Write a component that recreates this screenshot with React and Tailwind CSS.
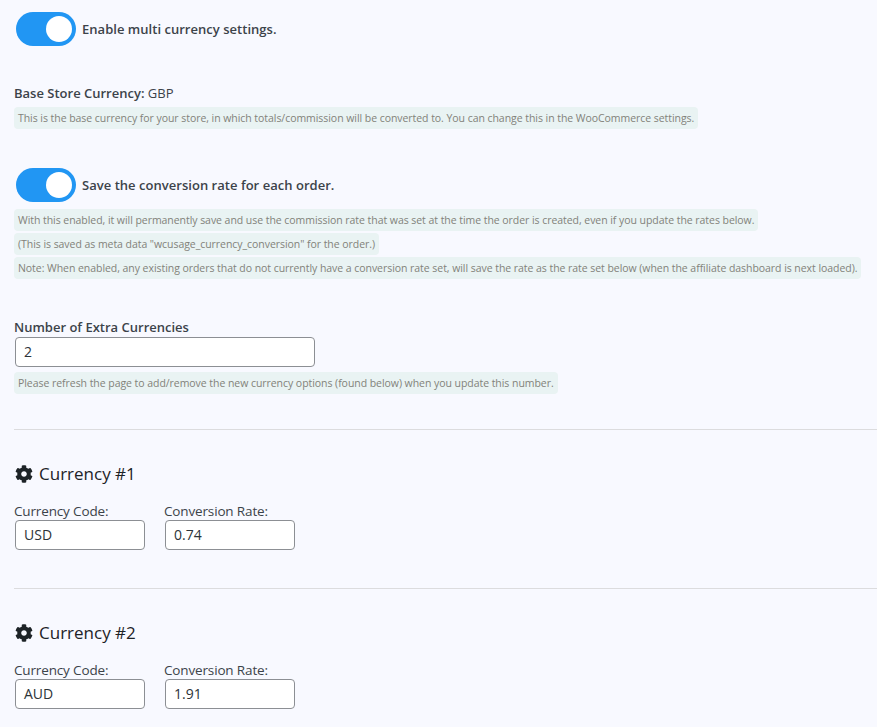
import { FaCog } from 'react-icons/fa';

const Toggle = () => (
  <span className="relative inline-block w-[60px] h-[34px] rounded-full bg-[#2196f3] shrink-0">
    <span className="absolute left-[30px] top-[4px] w-[26px] h-[26px] rounded-full bg-white"></span>
  </span>
);

const Note = ({ children }) => (
  <div className="flex">
    <span className="h-[22px] px-[4px] rounded-[4px] bg-[#e9f3f3] text-[#82827a] text-[10.5px] leading-[22px] whitespace-nowrap tracking-[-0.05px]">
      {children}
    </span>
  </div>
);

const Field = ({ label, value }) => (
  <div className="w-[150px]">
    <div className="text-[13.5px] leading-[18px] text-[#3c434a] tracking-[-0.15px]">{label}</div>
    <div className="ml-[1px] w-[130px] h-[30px] px-[8px] rounded-[4px] border border-[#8c8f94] bg-white text-[14px] leading-[28px] text-[#2c3338]">
      {value}
    </div>
  </div>
);

const Currency = ({ n, code, rate }) => (
  <section>
    <div className="h-[1px] bg-[#dcdcde]"></div>
    <h3 className="mt-[31px] flex items-center gap-[6px] h-[26px] text-[17px] font-medium text-[#1d2327]">
      <FaCog className="w-[18px] h-[18px] ml-[1px]" />
      <span>Currency #{n}</span>
    </h3>
    <div className="mt-[15px] flex">
      <Field label="Currency Code:" value={code} />
      <Field label="Conversion Rate:" value={rate} />
    </div>
  </section>
);

export default function App() {
  return (
    <div className="h-[727px] overflow-hidden bg-[#f8f9ff] pl-[14px] font-['Open_Sans','Noto_Sans',sans-serif] text-[#3c434a]">
      <div className="pt-[12px] pl-[2px] flex items-center gap-[6px]">
        <Toggle />
        <span className="pt-[2px] text-[13px] font-semibold tracking-[0.03px]">Enable multi currency settings.</span>
      </div>

      <div className="mt-[38px] text-[13px] leading-[18px]">
        <span className="font-semibold">Base Store Currency:</span> GBP
      </div>
      <div className="mt-[5px]">
        <Note>This is the base currency for your store, in which totals/commission will be converted to. You can change this in the WooCommerce settings.</Note>
      </div>

      <div className="mt-[39px] pl-[2px] flex items-center gap-[6px]">
        <Toggle />
        <span className="pt-[2px] text-[13px] font-semibold tracking-[0.03px]">Save the conversion rate for each order.</span>
      </div>
      <div className="mt-[7px] flex flex-col gap-[2px]">
        <Note>With this enabled, it will permanently save and use the commission rate that was set at the time the order is created, even if you update the rates below.</Note>
        <Note>(This is saved as meta data "wcusage_currency_conversion" for the order.)</Note>
        <Note>Note: When enabled, any existing orders that do not currently have a conversion rate set, will save the rate as the rate set below (when the affiliate dashboard is next loaded).</Note>
      </div>

      <div className="mt-[39px] text-[13px] leading-[18px] font-semibold">Number of Extra Currencies</div>
      <div className="mt-[1px] ml-[1px] w-[300px] h-[30px] px-[8px] rounded-[4px] border border-[#8c8f94] bg-white text-[14px] leading-[28px] text-[#2c3338]">2</div>
      <div className="mt-[5px]">
        <Note>Please refresh the page to add/remove the new currency options (found below) when you update this number.</Note>
      </div>

      <div className="mt-[35px]">
        <Currency n={1} code="USD" rate="0.74" />
      </div>
      <div className="mt-[38px]">
        <Currency n={2} code="AUD" rate="1.91" />
      </div>
    </div>
  );
}
